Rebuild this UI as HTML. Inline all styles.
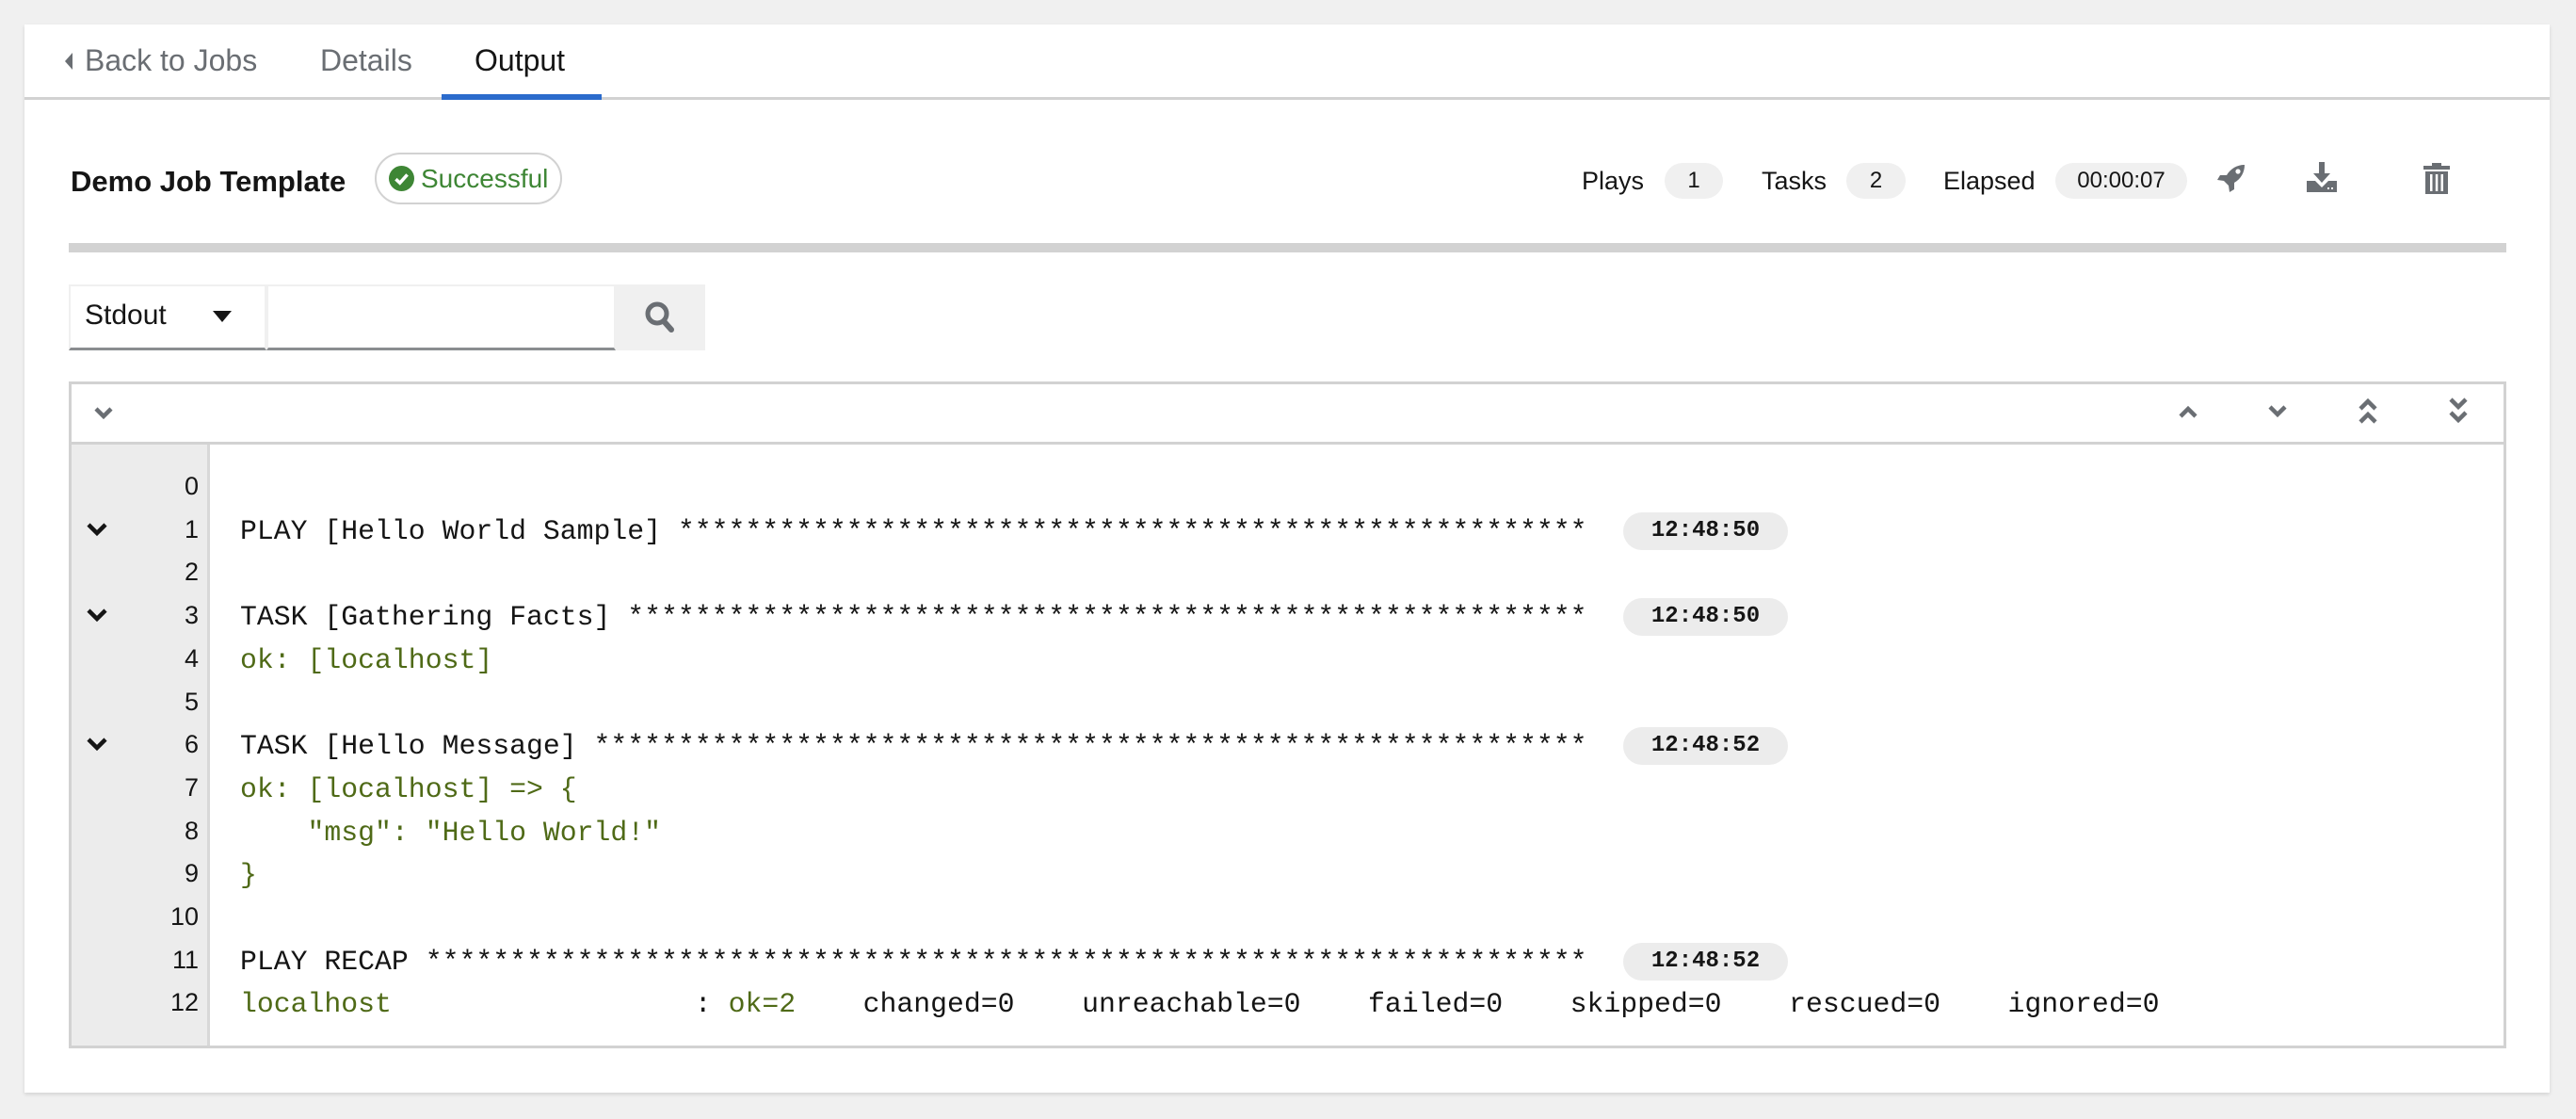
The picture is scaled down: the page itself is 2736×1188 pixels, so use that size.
<!DOCTYPE html>
<html><head><meta charset="utf-8"><style>
*{box-sizing:border-box;margin:0;padding:0}
body{width:2736px;height:1188px;background:#f0f0f0;font-family:"Liberation Sans",sans-serif;position:relative;overflow:hidden;color:#151515}
.card{position:absolute;left:26px;top:26px;width:2682px;height:1134px;background:#fff;box-shadow:0 2px 4px rgba(0,0,0,.12)}
.abs{position:absolute}
.tabs{position:absolute;left:0;top:0;width:100%;height:80px;border-bottom:3px solid #d2d2d2}
.tab{position:absolute;top:20px;font-size:32px;color:#6a6e73}
.pill{position:absolute;background:#f0f0f0;border-radius:20px;font-size:24px;text-align:center;color:#151515}
.lbl{position:absolute;font-size:27px;color:#151515}
.mono{font-family:"Liberation Mono",monospace;font-size:29.8px;white-space:pre}
.ln{position:absolute;left:0;width:185px;text-align:right;font-size:27px;color:#151515;font-family:"Liberation Sans",sans-serif}
.tx{position:absolute;left:229px}
.g{color:#4f6a17}
.ts{position:absolute;left:1698px;width:175px;height:40px;background:#ececec;border-radius:20px;font-family:"Liberation Mono",monospace;font-weight:bold;font-size:24px;line-height:40px;text-align:center}
.chev{position:absolute;left:66px}
</style></head><body>
<div class="card">
 <div class="tabs">
  <svg class="abs" style="left:42px;top:29px" width="10" height="20" viewBox="0 0 10 20"><path d="M9 1 L1 10 L9 19 Z" fill="#6a6e73"/></svg>
  <div class="tab" style="left:64px">Back to Jobs</div>
  <div class="tab" style="left:314px">Details</div>
  <div class="tab" style="left:478px;color:#151515">Output</div>
  <div class="abs" style="left:443px;top:74px;width:170px;height:6px;background:#2b6bcc"></div>
 </div>
 <div class="abs" style="left:49px;top:149px;font-size:31px;font-weight:bold">Demo Job Template</div>
 <div class="abs" style="left:372px;top:136px;width:199px;height:55px;border:2px solid #d2d2d2;border-radius:28px"></div>
 <svg class="abs" style="left:387px;top:150px" width="27" height="27" viewBox="0 0 20 20"><circle cx="10" cy="10" r="10" fill="#3e8635"/><path d="M5.5 10.5 L8.7 13.5 L14.5 7" stroke="#fff" stroke-width="2.6" fill="none"/></svg>
 <div class="abs" style="left:421px;top:148px;font-size:28px;color:#3e8635">Successful</div>

 <div class="lbl" style="left:1654px;top:151px">Plays</div>
 <div class="pill" style="left:1742px;top:147px;width:62px;height:38px;line-height:38px">1</div>
 <div class="lbl" style="left:1845px;top:151px">Tasks</div>
 <div class="pill" style="left:1935px;top:147px;width:63px;height:38px;line-height:38px">2</div>
 <div class="lbl" style="left:2038px;top:151px">Elapsed</div>
 <div class="pill" style="left:2157px;top:147px;width:140px;height:38px;line-height:38px">00:00:07</div>
 <svg class="abs" style="left:2328px;top:147px" width="32" height="32" viewBox="0 0 32 32"><path d="M30 2 C22 2 15 6 11 13 L4 13 L1 18 L8 19 L13 24 L14 31 L19 28 L19 21 C26 17 30 10 30 2 Z" fill="#6a6e73"/><circle cx="23" cy="9" r="2.6" fill="#fff"/></svg>
 <svg class="abs" style="left:2424px;top:146px" width="32" height="34" viewBox="0 0 32 34"><path d="M13 0 H19 V12 H25 L16 22 L7 12 H13 Z" fill="#6a6e73"/><path d="M0 20 H9 L16 27 L23 20 H32 V32 H0 Z" fill="#6a6e73"/><rect x="22" y="27" width="2" height="2" fill="#fff"/><rect x="26" y="27" width="2" height="2" fill="#fff"/></svg>
 <svg class="abs" style="left:2548px;top:146px" width="28" height="34" viewBox="0 0 28 34"><rect x="0" y="4" width="28" height="4" fill="#6a6e73"/><rect x="9" y="1" width="10" height="4" fill="#6a6e73"/><path d="M2 10 H26 V34 H2 Z" fill="#6a6e73"/><rect x="7" y="13" width="2.5" height="18" fill="#fff"/><rect x="12.8" y="13" width="2.5" height="18" fill="#fff"/><rect x="18.5" y="13" width="2.5" height="18" fill="#fff"/></svg>

 <div class="abs" style="left:47px;top:232px;width:2589px;height:10px;background:#d2d2d2"></div>

 <div class="abs" style="left:47px;top:276px;width:210px;height:70px;border:2px solid #f0f0f0;border-bottom:3px solid #8a8d90"></div>
 <div class="abs" style="left:64px;top:292px;font-size:30px">Stdout</div>
 <svg class="abs" style="left:200px;top:304px" width="20" height="12" viewBox="0 0 20 12"><path d="M0 0 H20 L10 12 Z" fill="#151515"/></svg>
 <div class="abs" style="left:257px;top:276px;width:371px;height:70px;border:2px solid #f0f0f0;border-bottom:3px solid #8a8d90"></div>
 <div class="abs" style="left:628px;top:276px;width:95px;height:70px;background:#f0f0f0"></div>
 <svg class="abs" style="left:659px;top:294px" width="32" height="34" viewBox="0 0 32 34"><circle cx="13" cy="13" r="10" stroke="#6a6e73" stroke-width="5" fill="none"/><path d="M20 21 L28 30" stroke="#6a6e73" stroke-width="6" stroke-linecap="round"/></svg>

 <div class="abs" style="left:47px;top:379px;width:2589px;height:708px;border:3px solid #d2d2d2"></div>
 <div class="abs" style="left:47px;top:443px;width:2589px;height:3px;background:#d2d2d2"></div>
 <svg class="abs" style="left:74px;top:406px" width="20" height="14" viewBox="0 0 20 14"><path d="M2 2 L10 10 L18 2" stroke="#6a6e73" stroke-width="4.5" fill="none"/></svg>
 <svg class="abs" style="left:2288px;top:404px" width="20" height="14" viewBox="0 0 20 14"><path d="M2 12 L10 4 L18 12" stroke="#6a6e73" stroke-width="4.5" fill="none"/></svg>
 <svg class="abs" style="left:2383px;top:404px" width="20" height="14" viewBox="0 0 20 14"><path d="M2 2 L10 10 L18 2" stroke="#6a6e73" stroke-width="4.5" fill="none"/></svg>
 <svg class="abs" style="left:2479px;top:396px" width="20" height="28" viewBox="0 0 20 28"><path d="M2 12 L10 4 L18 12 M2 26 L10 18 L18 26" stroke="#6a6e73" stroke-width="4.5" fill="none"/></svg>
 <svg class="abs" style="left:2575px;top:396px" width="20" height="28" viewBox="0 0 20 28"><path d="M2 2 L10 10 L18 2 M2 16 L10 24 L18 16" stroke="#6a6e73" stroke-width="4.5" fill="none"/></svg>

 <div class="abs" style="left:50px;top:446px;width:147px;height:638px;background:#ececec;border-right:3px solid #d8d8d8"></div>

 <div class="abs mono" style="left:0;top:0;width:100%">
   <div class="ln" style="top:475px">0</div>
   <div class="ln" style="top:521px">1</div><div class="tx" style="top:521px">PLAY [Hello World Sample] ******************************************************</div><div class="ts" style="top:518px">12:48:50</div>
   <div class="ln" style="top:566px">2</div>
   <div class="ln" style="top:612px">3</div><div class="tx" style="top:612px">TASK [Gathering Facts] *********************************************************</div><div class="ts" style="top:609px">12:48:50</div>
   <div class="ln" style="top:658px">4</div><div class="tx g" style="top:658px">ok: [localhost]</div>
   <div class="ln" style="top:704px">5</div>
   <div class="ln" style="top:749px">6</div><div class="tx" style="top:749px">TASK [Hello Message] ***********************************************************</div><div class="ts" style="top:746px">12:48:52</div>
   <div class="ln" style="top:795px">7</div><div class="tx g" style="top:795px">ok: [localhost] =&gt; {</div>
   <div class="ln" style="top:841px">8</div><div class="tx g" style="top:841px">    "msg": "Hello World!"</div>
   <div class="ln" style="top:886px">9</div><div class="tx g" style="top:886px">}</div>
   <div class="ln" style="top:932px">10</div>
   <div class="ln" style="top:978px">11</div><div class="tx" style="top:978px">PLAY RECAP *********************************************************************</div><div class="ts" style="top:975px">12:48:52</div>
   <div class="ln" style="top:1023px">12</div><div class="tx" style="top:1023px"><span class="g">localhost</span>                  : <span class="g">ok=2</span>    changed=0    unreachable=0    failed=0    skipped=0    rescued=0    ignored=0</div>
 </div>
 <svg class="chev" style="top:528px" width="22" height="16" viewBox="0 0 22 16"><path d="M2 3 L11 12 L20 3" stroke="#151515" stroke-width="4.5" fill="none"/></svg>
 <svg class="chev" style="top:619px" width="22" height="16" viewBox="0 0 22 16"><path d="M2 3 L11 12 L20 3" stroke="#151515" stroke-width="4.5" fill="none"/></svg>
 <svg class="chev" style="top:756px" width="22" height="16" viewBox="0 0 22 16"><path d="M2 3 L11 12 L20 3" stroke="#151515" stroke-width="4.5" fill="none"/></svg>
</div>
</body></html>
